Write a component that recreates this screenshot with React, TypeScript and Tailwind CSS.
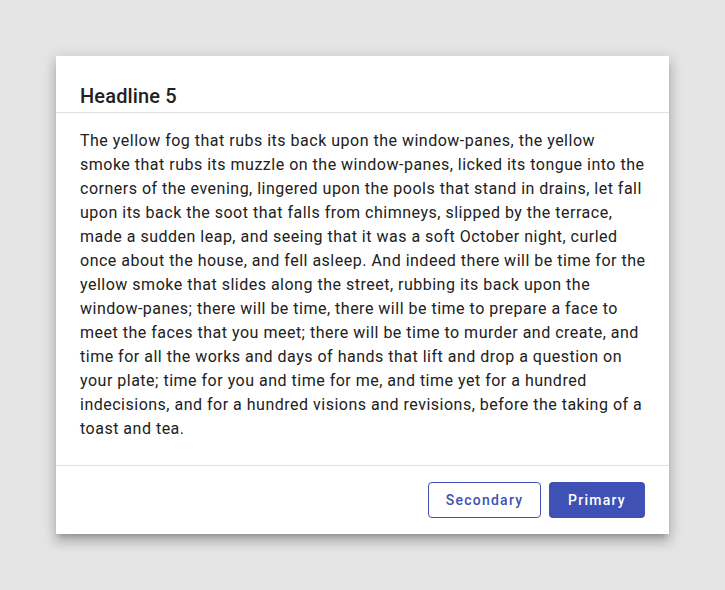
import React from "react";

const body =
  "The yellow fog that rubs its back upon the window-panes, the yellow smoke that rubs its muzzle on the window-panes, licked its tongue into the corners of the evening, lingered upon the pools that stand in drains, let fall upon its back the soot that falls from chimneys, slipped by the terrace, made a sudden leap, and seeing that it was a soft October night, curled once about the house, and fell asleep. And indeed there will be time for the yellow smoke that slides along the street, rubbing its back upon the window-panes; there will be time, there will be time to prepare a face to meet the faces that you meet; there will be time to murder and create, and time for all the works and days of hands that lift and drop a question on your plate; time for you and time for me, and time yet for a hundred indecisions, and for a hundred visions and revisions, before the taking of a toast and tea.";

export default function App() {
  return (
    <div className="min-h-screen bg-[#e5e5e5] flex justify-center py-14 font-['Roboto',sans-serif] text-[#212121]">
      <div className="w-[613px] bg-white shadow-[0_5px_5px_-3px_rgba(0,0,0,0.2),0_8px_10px_1px_rgba(0,0,0,0.14),0_3px_14px_2px_rgba(0,0,0,0.12)]">
        <div className="px-6 pt-6 border-b border-[#e0e0e0]">
          <h2 className="text-[20px] leading-8 font-medium tracking-[0.15px]">Headline 5</h2>
        </div>
        <div className="pl-6 pr-5 pt-4 pb-6 border-b border-[#e0e0e0]">
          <p className="text-base leading-6 tracking-[0.5px]">{body}</p>
        </div>
        <div className="flex justify-end gap-2 px-6 py-4">
          <button className="h-9 w-[113px] rounded border border-[#3f51b5] text-[#3f51b5] text-sm font-medium tracking-[1.25px]">
            Secondary
          </button>
          <button className="h-9 w-[96px] rounded bg-[#3f51b5] text-white text-sm font-medium tracking-[1.25px]">
            Primary
          </button>
        </div>
      </div>
    </div>
  );
}
